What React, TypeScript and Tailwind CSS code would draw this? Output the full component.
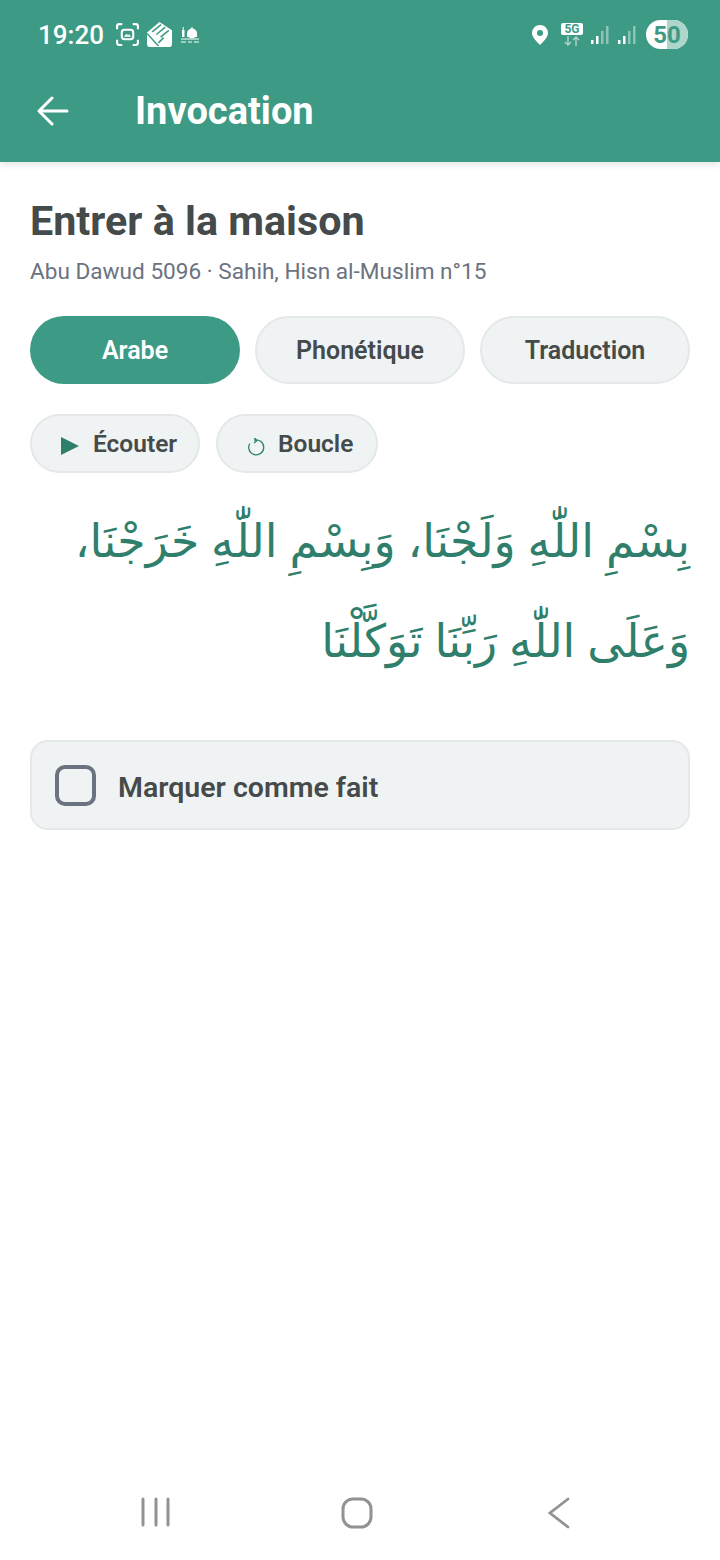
const tabs = ["Arabe", "Phonétique", "Traduction"];

function StatusBar() {
    return (
        <div className="flex h-[68px] items-center justify-between pl-[38px] pr-[32px] pt-[1px]">
            <div className="flex items-center">
                <span className="text-[26px] font-medium leading-none text-white">19:20</span>
                <svg viewBox="0 0 24 24" className="ml-[11px] size-[25px]" fill="none" stroke="white" strokeWidth="2">
                    <path d="M2 7V4a2 2 0 0 1 2-2h3M17 2h3a2 2 0 0 1 2 2v3M22 17v3a2 2 0 0 1-2 2h-3M7 22H4a2 2 0 0 1-2-2v-3" />
                    <rect x="6.500" y="7.500" width="11" height="9" rx="2.500" />
                    <path d="M9 14l2-2.500 1.500 1.500 1-1 1.500 2z" fill="white" strokeWidth="0.5" />
                </svg>
                <svg viewBox="0 0 24 24" className="ml-[7px] size-[25px]">
                    <path d="M0 10 12 0l12 8v13a3 3 0 0 1-3 3H3a3 3 0 0 1-3-3z" fill="white" />
                    <path d="M5 9.500 13.500 2.500M9 12l8.500-7M13 14.500l8-6.500M0 11l11 12M11 20l5-5" fill="none" stroke="#3d9a84" strokeWidth="1.500" />
                </svg>
                <svg viewBox="0 0 18 16" className="ml-[9px] h-[16px] w-[18px]" fill="white">
                    <rect x="1" y="3" width="2.500" height="7" />
                    <rect x="1.700" y="0" width="1" height="3" />
                    <circle cx="11" cy="6.500" r="5" />
                    <rect x="6" y="6.500" width="10" height="3.500" />
                    <rect x="10.500" y="0" width="1" height="2" />
                    <path d="M0 11.500h18v1H0zM0 14.500h5v1H0zM7 14.500h4v1H7zM13 14.500h5v1h-5z" />
                </svg>
            </div>
            <div className="flex items-center">
                <svg viewBox="0 0 16 20" className="h-[20px] w-[16px]" fill="white">
                    <path fillRule="evenodd" d="M8 0a8 8 0 0 1 8 8c0 4.500-5 9-8 12-3-3-8-7.500-8-12a8 8 0 0 1 8-8zm0 5a3 3 0 1 0 0 6 3 3 0 0 0 0-6z" />
                </svg>
                <div className="ml-[13px] -mt-[1px] flex w-[22px] flex-col items-center">
                    <span className="flex h-[12px] w-[22px] items-center justify-center rounded-[2px] bg-white text-[12px] font-bold leading-none text-[#3d9a84]">
                        5G
                    </span>
                    <svg viewBox="0 0 22 10" className="mt-[1px] h-[10px] w-[22px]" fill="none" stroke="#a9d3c8" strokeWidth="1.500">
                        <path d="M7 0v9M4 6l3 3 3-3M15 10V1M12 4l3-3 3 3" />
                    </svg>
                </div>
                <Signal className="ml-[8px]" />
                <Signal className="ml-[9px]" />
                <div className="relative ml-[10px] h-[29px] w-[42px] overflow-hidden rounded-full bg-white">
                    <div className="absolute inset-y-0 right-0 w-[21px] bg-[#aed5cb]" />
                    <span className="absolute inset-0 flex items-center justify-center text-[24px] font-bold leading-none text-[#3d9a84]">
                        50
                    </span>
                </div>
            </div>
        </div>
    );
}

function Signal({ className }: { className: string }) {
    return (
        <svg viewBox="0 0 18 20" className={`h-[20px] w-[18px] ${className}`}>
            <rect x="0" y="15" width="2.500" height="4" fill="white" />
            <rect x="5" y="11" width="2.500" height="8" fill="white" />
            <rect x="10" y="6" width="2.500" height="13" fill="#8cc5b7" />
            <rect x="15" y="1" width="2.500" height="18" fill="#8cc5b7" />
        </svg>
    );
}

export default function App() {
    return (
        <div className="flex h-[1560px] w-[720px] flex-col bg-white font-['Roboto',sans-serif] text-[#454a4b]">
            <header className="h-[162px] bg-[#3d9a84] shadow-[0_2px_8px_rgba(0,0,0,0.12)]">
                <StatusBar />
                <div className="flex h-[86px] items-center pl-[37px]">
                    <svg viewBox="0 0 32 30" className="h-[30px] w-[32px]" fill="none" stroke="white" strokeWidth="3" strokeLinecap="round" strokeLinejoin="round">
                        <path d="M30 15H3M15 2 2 15l13 13" />
                    </svg>
                    <h1 className="ml-[66px] text-[38px] font-bold leading-none text-white">Invocation</h1>
                </div>
            </header>

            <main className="flex-1 px-[30px] pt-[35px]">
                <h2 className="text-[41.250px] font-bold leading-[48px]">Entrer à la maison</h2>
                <p className="mt-[11px] text-[22.600px] leading-[32px] text-[#6b7280]">
                    Abu Dawud 5096 · Sahih, Hisn al-Muslim n°15
                </p>

                <div className="mt-[28px] grid grid-cols-3 gap-[15px]">
                    {tabs.map((tab, i) => (
                        <button
                            key={tab}
                            className={
                                i === 0
                                    ? "h-[68px] rounded-full bg-[#3d9a84] pt-[2px] text-[25px] font-semibold text-white"
                                    : "h-[68px] rounded-full border-2 border-[#e4e8e8] bg-[#f0f3f3] pt-[2px] text-[25px] font-semibold"
                            }
                        >
                            {tab}
                        </button>
                    ))}
                </div>

                <div className="mt-[30px] flex gap-[16px]">
                    <button className="flex h-[59px] w-[170px] items-center rounded-full border-2 border-[#e4e8e8] bg-[#f0f3f3] pl-[29px] pt-[2px] text-[24.500px] font-semibold">
                        <svg viewBox="0 0 18 18" className="mt-[3px] size-[18px]" fill="#2d7f6b">
                            <path d="M0 0l18 9-18 9z" />
                        </svg>
                        <span className="ml-[14px]">Écouter</span>
                    </button>
                    <button className="flex h-[59px] w-[162px] items-center rounded-full border-2 border-[#e4e8e8] bg-[#f0f3f3] pl-[29px] pt-[2px] text-[24.500px] font-semibold">
                        <svg viewBox="0 0 18 18" className="mt-[4px] size-[18px]" fill="none" stroke="#2d7f6b" strokeWidth="1.300">
                            <path d="M7 2.200A7.500 7.500 0 1 1 2.800 5.500M7.500 0 10 2.500 7 5" />
                        </svg>
                        <span className="ml-[13px]">Boucle</span>
                    </button>
                </div>

                <div
                    dir="rtl"
                    className="mt-[16px] font-['Noto_Sans','DejaVu_Sans',sans-serif] text-[45.800px] leading-[100px] text-[#2f7f6c]"
                >
                    بِسْمِ اللّٰهِ وَلَجْنَا، وَبِسْمِ اللّٰهِ خَرَجْنَا، وَعَلَى اللّٰهِ رَبِّنَا تَوَكَّلْنَا
                </div>

                <div className="mt-[51px] flex h-[90px] items-center rounded-[18px] border-2 border-[#e4e8e8] bg-[#f0f3f3] pl-[23px]">
                    <div className="size-[41px] rounded-[10px] border-[4px] border-[#6b7280]" />
                    <span className="ml-[22px] pt-[6px] text-[28.500px] font-semibold">Marquer comme fait</span>
                </div>
            </main>

            <nav className="flex h-[94px] items-start pt-[31px]">
                <svg viewBox="0 0 30 30" className="ml-[141px] size-[30px]" fill="none" stroke="#929292" strokeWidth="3" strokeLinecap="round">
                    <path d="M2 2v26M15 2v26M27 2v26" />
                </svg>
                <svg viewBox="0 0 32 32" className="ml-[170px] size-[32px]" fill="none" stroke="#929292" strokeWidth="3">
                    <rect x="2" y="2" width="28" height="28" rx="10" />
                </svg>
                <svg viewBox="0 0 22 32" className="ml-[175px] h-[32px] w-[22px]" fill="none" stroke="#929292" strokeWidth="2.800" strokeLinecap="round">
                    <path d="M20 2 2 16l18 14" />
                </svg>
            </nav>
        </div>
    );
}
